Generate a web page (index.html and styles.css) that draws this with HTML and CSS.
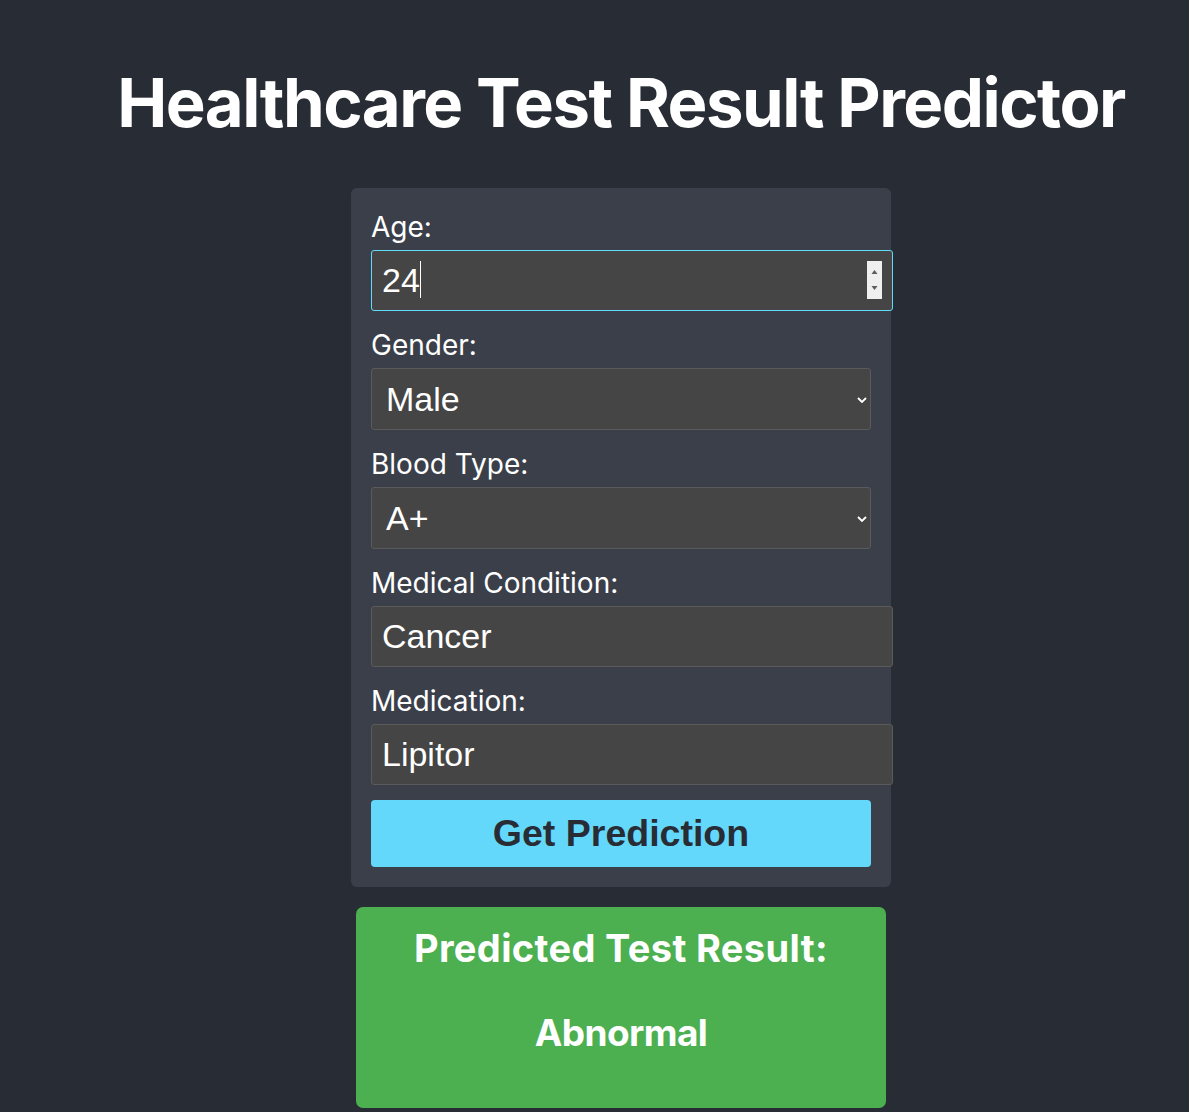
FILE: index.html
```html
<!DOCTYPE html>
<html lang="en">
<head>
<meta charset="utf-8">
<title>Healthcare Test Result Predictor</title>
<link rel="stylesheet" href="styles.css">
</head>
<body>
<div class="app">
  <h1 class="title">Healthcare Test Result Predictor</h1>
  <form class="card">
    <div class="group">
      <label class="label" for="age">Age:</label>
      <div class="wrap">
        <input id="age" class="field field-focus" type="number" value="24">
        <span class="caret"></span>
        <span class="spinner">
          <svg width="15" height="38" viewBox="0 0 15 38"><path d="M4.5 13 L7.5 9 L10.5 13 Z" fill="#5c5c5c"/><path d="M4.5 25 L7.5 29 L10.5 25 Z" fill="#5c5c5c"/></svg>
        </span>
      </div>
    </div>
    <div class="group">
      <label class="label" for="gender">Gender:</label>
      <div class="wrap">
        <select id="gender" class="select"><option>Male</option><option>Female</option></select>
        <svg class="chev" width="10" height="6" viewBox="0 0 10 6"><path d="M1 1 L5 5 L9 1" fill="none" stroke="#fff" stroke-width="1.8"/></svg>
      </div>
    </div>
    <div class="group">
      <label class="label" for="blood">Blood Type:</label>
      <div class="wrap">
        <select id="blood" class="select"><option>A+</option><option>A-</option><option>B+</option><option>B-</option><option>AB+</option><option>AB-</option><option>O+</option><option>O-</option></select>
        <svg class="chev" width="10" height="6" viewBox="0 0 10 6"><path d="M1 1 L5 5 L9 1" fill="none" stroke="#fff" stroke-width="1.8"/></svg>
      </div>
    </div>
    <div class="group">
      <label class="label" for="cond">Medical Condition:</label>
      <div class="wrap">
        <input id="cond" class="field" type="text" value="Cancer">
      </div>
    </div>
    <div class="group">
      <label class="label" for="med">Medication:</label>
      <div class="wrap">
        <input id="med" class="field" type="text" value="Lipitor">
      </div>
    </div>
    <button class="btn" type="button">Get Prediction</button>
  </form>
  <div class="result">
    <h2 class="result-title">Predicted Test Result:</h2>
    <p class="result-value">Abnormal</p>
  </div>
</div>
</body>
</html>
```

FILE: styles.css
```css
html, body {
  margin: 0;
  padding: 0;
  background: #282c34;
}

body {
  font-family: Inter, "Noto Sans", sans-serif;
  color: #ffffff;
}

.app {
  display: flex;
  flex-direction: column;
  align-items: center;
  padding: 62px 0 0 53px;
  min-height: 1112px;
  box-sizing: border-box;
}

.title {
  margin: 0 0 45px;
  font-size: 67px;
  font-weight: 700;
  line-height: 81px;
  letter-spacing: -1.5px;
  text-align: center;
  white-space: nowrap;
  color: #ffffff;
}

.card {
  width: 540px;
  box-sizing: border-box;
  padding: 20px;
  background: #3b3f4a;
  border-radius: 6px;
  display: flex;
  flex-direction: column;
}

.group {
  display: flex;
  flex-direction: column;
  margin-bottom: 15px;
}

.label {
  display: block;
  font-size: 28px;
  line-height: 38px;
  margin-bottom: 4px;
  color: #ffffff;
}

.wrap {
  position: relative;
  width: 500px;
}

.field {
  display: block;
  width: 100%;
  box-sizing: content-box;
  margin: 0;
  padding: 10px 10px;
  height: 39px;
  border: 1px solid #5a5a5a;
  border-radius: 3px;
  background: #454545;
  color: #ffffff;
  font-family: "Liberation Sans", Arial, sans-serif;
  font-size: 34px;
  outline: none;
}

.field-focus {
  border-color: #61dafb;
  -moz-appearance: textfield;
}

.field-focus::-webkit-inner-spin-button,
.field-focus::-webkit-outer-spin-button {
  -webkit-appearance: none;
  margin: 0;
}

.caret {
  position: absolute;
  left: 49px;
  top: 11px;
  width: 1px;
  height: 37px;
  background: #ffffff;
}

.spinner {
  position: absolute;
  left: 496px;
  top: 11px;
  width: 15px;
  height: 38px;
  background: #efefef;
  display: block;
}

.spinner svg {
  display: block;
}

.select {
  display: block;
  width: 100%;
  box-sizing: border-box;
  height: 62px;
  margin: 0;
  padding: 0 30px 0 14px;
  border: 1px solid #5a5a5a;
  border-radius: 3px;
  background: #454545;
  color: #ffffff;
  font-family: "Liberation Sans", Arial, sans-serif;
  font-size: 34px;
  -webkit-appearance: none;
  appearance: none;
  outline: none;
}

.chev {
  position: absolute;
  right: 4px;
  top: 29px;
  pointer-events: none;
}

.btn {
  margin-top: 0;
  height: 67px;
  width: 100%;
  border: none;
  border-radius: 4px;
  background: #64d8fa;
  color: #282c34;
  font-family: "Liberation Sans", Arial, sans-serif;
  font-weight: 700;
  font-size: 37.5px;
  cursor: pointer;
  padding: 0;
}

.result {
  margin-top: 20px;
  width: 530px;
  box-sizing: border-box;
  padding: 19px 15px 53px;
  background: #4caf50;
  border-radius: 7px;
  text-align: center;
}

.result-title {
  margin: 0 0 39px;
  font-size: 38px;
  font-weight: 700;
  line-height: 45px;
  letter-spacing: 0.35px;
}

.result-value {
  margin: 0;
  font-size: 37px;
  font-weight: 700;
  line-height: 45px;
  letter-spacing: -0.6px;
}
```
